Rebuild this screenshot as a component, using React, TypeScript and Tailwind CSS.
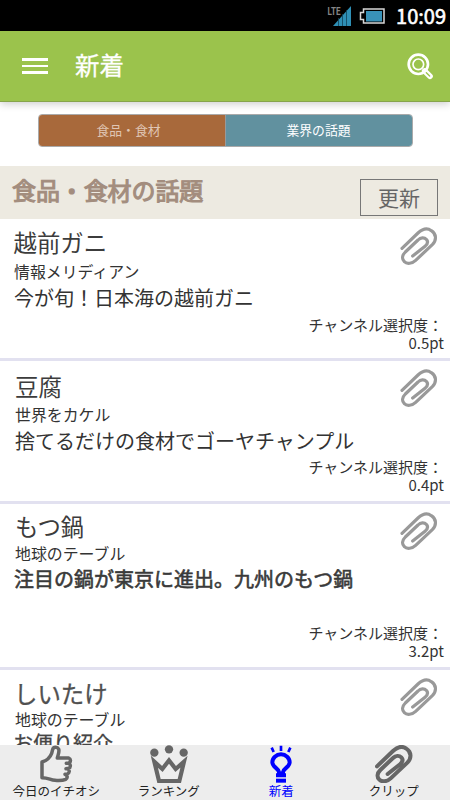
import clsx from "clsx";

interface Topic {
  title: string;
  source: string;
  headline: string;
  points?: string;
  // spacing differs from row to row
  rowClass: string;
  titleClass: string;
  sourceClass: string;
  headlineClass: string;
  pointsClass: string;
}

const topics: Topic[] = [
  {
    title: "越前ガニ",
    source: "情報メリディアン",
    headline: "今が旬！日本海の越前ガニ",
    points: "0.5pt",
    rowClass: "h-[142px] pt-[9px]",
    titleClass: "pl-[13.5px] text-[#3c3c3c]",
    sourceClass: "mt-[5px] pl-3.5",
    headlineClass: "mt-px pl-3.5 text-[#333]",
    pointsClass: "mt-1",
  },
  {
    title: "豆腐",
    source: "世界をカケル",
    headline: "捨てるだけの食材でゴーヤチャンプル",
    points: "0.4pt",
    rowClass: "h-[143px] pt-[11px]",
    titleClass: "pl-[15px] text-[#3c3c3c]",
    sourceClass: "mt-1 pl-[15px]",
    headlineClass: "mt-px pl-[15px] text-[#333]",
    pointsClass: "mt-[3px]",
  },
  {
    title: "もつ鍋",
    source: "地球のテーブル",
    headline: "注目の鍋が東京に進出。九州のもつ鍋",
    points: "3.2pt",
    rowClass: "h-[166px] pt-2",
    titleClass: "pl-[15px] text-[#3c3c3c]",
    sourceClass: "mt-[3px] pl-[15px]",
    headlineClass: "pl-3.5 text-[#3a3a3a] [-webkit-text-stroke:0.6px]",
    pointsClass: "mt-[31px]",
  },
  {
    title: "しいたけ",
    source: "地球のテーブル",
    headline: "お便り紹介",
    rowClass: "h-[142px] pt-[9px]",
    titleClass: "pl-3.5 text-[#505050] [-webkit-text-stroke:0.3px]",
    sourceClass: "mt-[2px] pl-[15px]",
    headlineClass: "-mt-0.5 pl-[13px] text-[#444] [-webkit-text-stroke:0.3px]",
    pointsClass: "",
  },
];

function ClipIcon({ className, strokeWidth = 9.5 }: { className?: string; strokeWidth?: number }) {
  return (
    <svg viewBox="30 36 114 114" className={className} fill="none" stroke="currentColor" strokeWidth={strokeWidth} strokeLinecap="round">
      <path d="M36 100 L84 54 C97 42 112 38 124 47 C140 57 140 76 127 89 L77 136 C66 146 51 148 43 140 C35 132 36 121 46 111 L84 75 C92 67 103 67 109 73 C115 79 113 86 106 93 L68 123" />
    </svg>
  );
}

function ThumbIcon() {
  return (
    <svg viewBox="54 21 108 114" className="h-[38px] w-9" fill="none" stroke="currentColor" strokeWidth="10.5" strokeLinejoin="round">
      <path d="M66 72 C80 68 90 59 95 46 L98 34 C101 26 112 26 116 33 C119 42 114 51 112 60 L146 60 C153 63 153 71 147 75 L139 76 H147 C153 80 152 89 146 91 L138 92 H143 C150 96 149 105 142 108 L135 109 C144 112 143 121 137 124 C128 128 115 128 105 127 C91 126 85 119 66 119 Z" />
    </svg>
  );
}

function CrownIcon() {
  return (
    <svg viewBox="449 225 114 114" className="size-[38px]" fill="currentColor">
      <circle cx="462" cy="248" r="12.5" />
      <circle cx="506" cy="238" r="12.5" />
      <circle cx="550" cy="248" r="12.5" />
      <path d="M462 275 L476 333 H537 L551 275 L526 297 L506 271 L486 297 Z" fill="none" stroke="currentColor" strokeWidth="12.5" />
    </svg>
  );
}

function BulbIcon() {
  return (
    <svg viewBox="112 225 114 114" className="size-[38px]" fill="none" stroke="currentColor" strokeWidth="12">
      <path d="M141 233 L147 246 M169 227 V243 M197 233 L191 246" strokeWidth="8" />
      <path d="M154 316 H163 V306 C161 294 143 292 143 277 A26 24 0 0 1 195 277 C195 292 177 294 175 306 V316 H184" />
      <path d="M154 332 H184" strokeWidth="12" />
    </svg>
  );
}

function StatusBar() {
  return (
    <div className="flex h-[31px] shrink-0 items-center justify-end bg-black pr-1">
      <svg viewBox="325 3 60 24" className="mr-[10px] h-6 w-[60px]">
        <text x="326.5" y="13.5" fontSize="11.5" fontWeight="bold" textLength="13" lengthAdjust="spacingAndGlyphs" fill="#858585" fontFamily="Roboto, sans-serif">LTE</text>
        <path d="M332 25 L350 5 V25 Z" fill="#2f8fb5" />
        <path d="M337.5 17 V25 M341.5 13 V25 M345.5 9 V25" stroke="#124358" strokeWidth="0.8" />
        <path d="M362.5 8 H383 V22 H362.5 V18.5 H359.5 V11.5 H362.5 Z" fill="#000" stroke="#d8d8d8" strokeWidth="1.5" />
        <rect x="365" y="10" width="16" height="10.5" fill="#3992b8" />
      </svg>
      <span className="text-[20px] leading-8 text-white [-webkit-text-stroke:0.6px]">10:09</span>
    </div>
  );
}

function TopicRow({ topic }: { topic: Topic }) {
  return (
    <li className={clsx("relative flex flex-col border-b-[3px] border-[#e2e1f0] whitespace-nowrap", topic.rowClass)}>
      <h3 className={clsx("h-7 text-[23.4px] leading-7", topic.titleClass)}>{topic.title}</h3>
      <p className={clsx("h-[22px] text-[15.9px] leading-[22px] text-[#333]", topic.sourceClass)}>{topic.source}</p>
      <p className={clsx("h-7 text-[20px] leading-7", topic.headlineClass)}>{topic.headline}</p>
      {topic.points && (
        <div className={clsx("flex flex-col items-end pr-1.5 text-[15px] leading-[17.5px] text-[#333]", topic.pointsClass)}>
          <span className="mr-px">チャンネル選択度：</span>
          <span>{topic.points}</span>
        </div>
      )}
      <button className="absolute top-2 right-3 text-[#999]">
        <ClipIcon className="size-[38px]" />
      </button>
    </li>
  );
}

const tabs = [
  { label: "今日のイチオシ", icon: <ThumbIcon /> },
  { label: "ランキング", icon: <CrownIcon /> },
  { label: "新着", icon: <BulbIcon />, active: true },
  { label: "クリップ", icon: <ClipIcon className="size-[38px]" strokeWidth={12} /> },
];

export default function App() {
  return (
    <div className="flex h-[800px] w-[450px] flex-col overflow-hidden bg-white font-['Noto_Sans_CJK_JP',sans-serif]">
      <StatusBar />

      <header className="z-10 flex h-[71px] shrink-0 items-center border-b border-[#86a44b] bg-[#9bc34c] pr-4 pl-[22px] text-white shadow-[0_2px_8px_rgba(0,0,0,0.2)]">
        <button className="flex flex-col gap-[4px]">
          <span className="h-[2.5px] w-[26px] bg-white" />
          <span className="h-[2.5px] w-[26px] bg-white" />
          <span className="h-[2.5px] w-[26px] bg-white" />
        </button>
        <h1 className="ml-[27px] pb-[3px] text-[24.5px] leading-8 [-webkit-text-stroke:0.3px]">新着</h1>
        <button className="ml-auto">
          <svg viewBox="320 159 81 81" className="size-[27px]" fill="none" stroke="currentColor">
            <circle cx="354" cy="193" r="29" strokeWidth="8" />
            <circle cx="354" cy="193" r="16" strokeWidth="5" />
            <path d="M373 213 L389 229" strokeWidth="17" strokeLinecap="round" />
            <path d="M378 218 L388 228" stroke="#9bc34c" strokeWidth="4" strokeLinecap="round" />
          </svg>
        </button>
      </header>

      <div className="flex h-16 shrink-0 justify-center pt-3">
        <div className="flex h-[33px] w-[375px] overflow-hidden rounded-[4px] border border-[#aaa] text-[12.8px] text-white">
          <button className="w-[187px] border-r border-[#999] bg-[#a8693b] pr-1.5 pb-0.5 text-[#e0c6b5]">食品・食材</button>
          <button className="flex-1 bg-[#61919f] pb-0.5">業界の話題</button>
        </div>
      </div>

      <div className="flex h-[53px] shrink-0 justify-between bg-[#edeae1] pr-3 pl-3">
        <h2 className="mt-2 text-[24px] leading-8 tracking-[-0.1px] text-[#a38d7e] [-webkit-text-stroke:1.1px]">食品・食材の話題</h2>
        <button className="mt-[13px] h-[37px] w-[78px] border border-[#777] pb-0.5 text-[21px] leading-[32px] text-[#666]">更新</button>
      </div>

      <ul className="min-h-0 flex-1 overflow-hidden">
        {topics.map((topic) => (
          <TopicRow key={topic.title} topic={topic} />
        ))}
      </ul>

      <nav className="grid h-[55px] shrink-0 grid-cols-4 bg-[#ededed]">
        {tabs.map((tab) => (
          <button key={tab.label} className="flex flex-col items-center">
            <span className={tab.active ? "text-[#0000ff]" : "text-[#666]"}>{tab.icon}</span>
            <span className={clsx("text-[12.5px] leading-[15px]", tab.active ? "text-[#0000ff]" : "text-[#222]")}>{tab.label}</span>
          </button>
        ))}
      </nav>
    </div>
  );
}
